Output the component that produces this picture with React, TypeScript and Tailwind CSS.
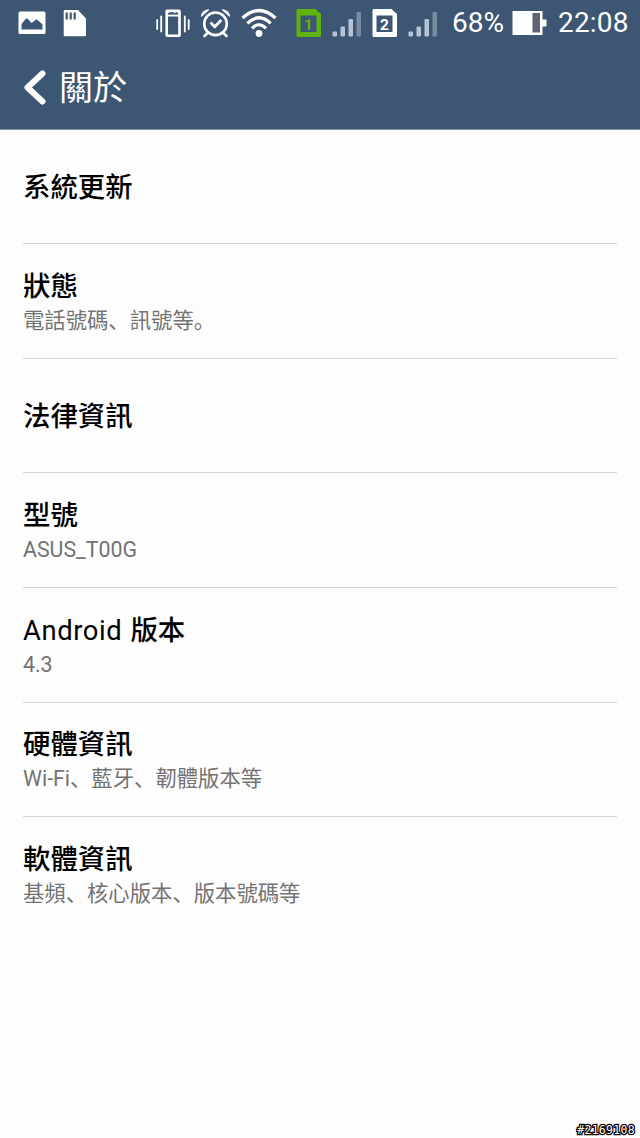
import React from "react";

type Entry = { title: string; latin?: string; detail?: string };

const entries: Entry[] = [
  { title: "系統更新" },
  { title: "狀態", detail: "電話號碼、訊號等。" },
  { title: "法律資訊" },
  { title: "型號", detail: "ASUS_T00G" },
  { latin: "Android", title: "版本", detail: "4.3" },
  { title: "硬體資訊", detail: "Wi-Fi、藍牙、韌體版本等" },
  { title: "軟體資訊", detail: "基頻、核心版本、版本號碼等" },
];

function PictureIcon() {
  return (
    <svg className="ml-[18px] h-[24px] w-[28px] shrink-0" viewBox="0 0 28 24">
      <rect x="0.5" y="0.5" width="27" height="22.5" rx="1.5" fill="#fff" />
      <path d="M3.500 18.500v-5.500l4.500-5.500h1.500l4 4.500 5-3.800 6 5v5.300z" fill="#3c5674" />
    </svg>
  );
}

function CardIcon() {
  return (
    <svg className="ml-[17px] h-[28px] w-[24px] shrink-0" viewBox="0 0 24 28">
      <path d="M1.500 1h13.500l8 8.500v16.500q0 1.300-1.300 1.300h-19.700q-1.300 0-1.300-1.300v-23.500q0-1.500 .8-1.500z" fill="#fff" />
      <path d="M3.700 3.500v7M7.700 3.500v7M11.700 3.500v7" stroke="#3c5674" strokeWidth="2.200" />
    </svg>
  );
}

function VibrateIcon() {
  return (
    <svg className="h-[30px] w-[34px] shrink-0" viewBox="0 0 34 30" fill="none" stroke="#fff">
      <rect x="10.700" y="2.700" width="12.800" height="25" rx="0.500" strokeWidth="2.600" />
      <path d="M10 4h14M10 7.500h14" strokeWidth="2.200" />
      <path d="M13 5.200h5M19.500 5.200h2" strokeWidth="2" stroke="#3c5674" />
      <path d="M1.200 12v9M5.200 8.500v15M28.800 8.500v15M32.700 12v9" strokeWidth="1.800" strokeLinecap="round" />
    </svg>
  );
}

function AlarmIcon() {
  return (
    <svg className="ml-[10px] h-[30px] w-[32px] shrink-0" viewBox="0 0 32 30" fill="none" stroke="#fff">
      <circle cx="15.500" cy="15.800" r="11.300" strokeWidth="2.600" />
      <path d="M1.500 8Q2.500 2.500 8.500 1.800Q5 5 1.500 8zM29.500 8Q28.500 2.500 22.500 1.800Q26 5 29.500 8z" fill="#fff" strokeWidth="1.200" strokeLinejoin="round" />
      <path d="M7.500 25l-3 3M23.500 25l3 3" strokeWidth="2.600" strokeLinecap="round" />
      <path d="M10.500 14.500l4.300 4.300 6.500-6.800" strokeWidth="2.700" />
    </svg>
  );
}

function WifiIcon() {
  return (
    <svg className="ml-[9px] h-[30px] w-[36px] shrink-0" viewBox="0 0 36 30" fill="none" stroke="#fff" strokeWidth="3.200">
      <path d="M1.500 10Q18-5 34.500 10" />
      <path d="M6.300 15.300Q18 4.300 29.700 15.300" />
      <path d="M11 20.300Q18 13.200 25 20.300" />
      <circle cx="18" cy="25.500" r="3.400" fill="#fff" stroke="none" />
    </svg>
  );
}

function SimIcon({ color, digit, label }: { color: string; digit: string; label: string }) {
  return (
    <svg className="h-[30px] w-[26px] shrink-0" viewBox="0 0 26 30">
      <path d="M2.300 1h17.200l5.500 5v21.500q0 1.500-1.500 1.500h-21.500q-1.500 0-1.500-1.500v-25q0-1.500 1.300-1.500z" fill={color} />
      <rect x="4.500" y="7.500" width="16" height="16.500" fill="#3c5674" />
      <text x="12.500" y="21.500" textAnchor="middle" fill={label} fontSize="15.500" fontWeight="700" fontFamily="Roboto, sans-serif">{digit}</text>
    </svg>
  );
}

function SignalIcon() {
  return (
    <svg className="h-[27px] w-[30px] shrink-0" viewBox="0 0 30 27" fill="#b5c3d5">
      <rect x="0.500" y="20.500" width="4.500" height="5" rx="1" />
      <rect x="8.500" y="15.500" width="4.500" height="10" rx="1" />
      <rect x="16.500" y="8" width="4.500" height="17.500" rx="1" />
      <rect x="24.500" y="1" width="4.500" height="24.500" rx="1" fill="#788ba3" />
    </svg>
  );
}

function BatteryIcon() {
  return (
    <svg className="ml-[8px] h-[26px] w-[35px] shrink-0" viewBox="0 0 35 26">
      <path d="M.5 1h30v8.500h4v7h-4v8.500h-30z" fill="#fff" />
      <rect x="20.500" y="3" width="7.500" height="19.500" fill="#5d6670" />
    </svg>
  );
}

function StatusBar() {
  return (
    <div className="flex h-[46px] items-center font-[Roboto,sans-serif] text-[28px] leading-[46px]">
      <PictureIcon />
      <CardIcon />
      <div className="ml-[69px] flex items-center">
        <VibrateIcon />
        <AlarmIcon />
        <WifiIcon />
      </div>
      <div className="ml-[19px] flex items-center">
        <SimIcon color="#5fb30b" digit="1" label="#5fb30b" />
        <div className="mt-[2px] ml-[10px]"><SignalIcon /></div>
        <div className="ml-[10px] flex"><SimIcon color="#fff" digit="2" label="#fff" /></div>
        <div className="mt-[2px] ml-[10px]"><SignalIcon /></div>
      </div>
      <span className="ml-[14px] w-[52px]">68%</span>
      <BatteryIcon />
      <span className="ml-[11px] tracking-[0.2px]">22:08</span>
    </div>
  );
}

function Row({ title, latin, detail }: Entry) {
  return (
    <li className={`flex h-[114.600px] flex-col justify-center border-b border-[#d5d5d5] last:border-transparent ${detail ? "pt-[6px]" : "pt-[3px]"}`}>
      <h2 className="flex text-[27.400px] leading-[34px] font-medium text-black">
        {latin && <span className="mr-[8px] font-normal tracking-[0.6px]">{latin}</span>}
        {title}
      </h2>
      {detail && <p className="text-[21.350px] leading-[34px] text-[#737373]">{detail}</p>}
    </li>
  );
}

export default function App() {
  return (
    <div lang="zh-Hans" className="flex h-[1138px] w-[640px] flex-col overflow-hidden bg-[#fdfdfd] font-[Roboto,'Noto_Sans_CJK_SC',sans-serif]">
      <header className="h-[129.600px] shrink-0 border-b border-[#8795a1] bg-[#3c5674] text-white">
        <StatusBar />
        <div className="flex h-[83px] items-center pl-[23px]">
          <svg className="h-[36px] w-[24px]" viewBox="0 0 24 36" fill="none" stroke="#fff" strokeWidth="6" strokeLinecap="round" strokeLinejoin="round">
            <path d="M19.500 3.500L4.500 17.500l15 14" />
          </svg>
          <h1 className="ml-[12px] pt-px text-[34px] leading-[40px]">關於</h1>
        </div>
      </header>
      <ul className="px-[23px]">
        {entries.map((entry) => (
          <Row key={entry.title} {...entry} />
        ))}
      </ul>
      <div className="mt-auto mr-[5px] mb-px self-end font-['DejaVu_Sans_Mono',monospace] text-[11.500px] leading-[14px] tracking-[0.300px] text-white [paint-order:stroke_fill] [-webkit-text-stroke:2.500px_black]">
        #2169108
      </div>
    </div>
  );
}
